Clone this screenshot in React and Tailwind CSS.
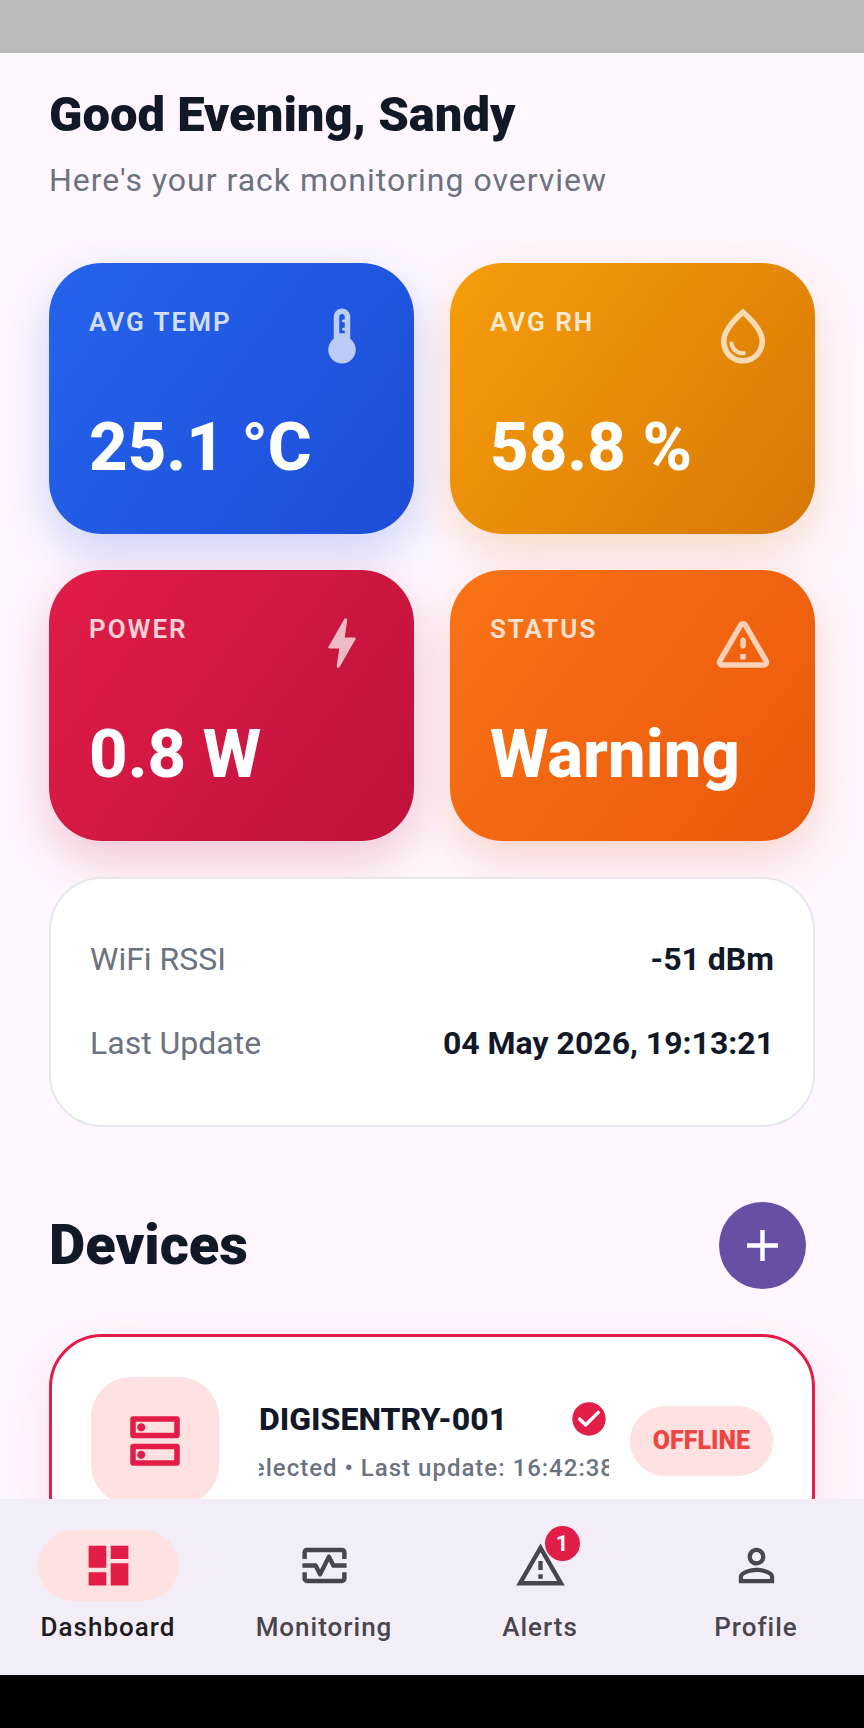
import React, { useState } from "react";
import {
  MdAdd,
  MdDashboard,
  MdOutlineDns,
  MdOutlineMonitorHeart,
  MdOutlineWarningAmber,
  MdOutlineWaterDrop,
  MdPersonOutline,
} from "react-icons/md";

function ThermometerIcon({ className }) {
  return (
    <svg viewBox="0 0 24 24" fill="currentColor" className={className}>
      <path d="M15 13V5c0-1.66-1.34-3-3-3S9 3.34 9 5v8c-1.21.91-2 2.37-2 4 0 2.76 2.24 5 5 5s5-2.24 5-5c0-1.63-.79-3.09-2-4zm-4-2V5c0-.55.45-1 1-1s1 .45 1 1v1h-.5c-.28 0-.5.22-.5.5s.22.5.5.5h.5v2h-.5c-.28 0-.5.22-.5.5s.22.5.5.5h.5v1h-2z" />
    </svg>
  );
}

function BoltIcon({ className }) {
  return (
    <svg viewBox="0 0 24 24" fill="currentColor" className={className}>
      <path d="M10.67 21c-.35 0-.62-.31-.57-.66L11 14H7.5c-.88 0-.33-.75-.31-.78 1.26-2.23 3.15-5.53 5.65-9.93.1-.18.3-.29.5-.29.35 0 .62.31.57.66L13.01 10h3.51c.4 0 .62.19.4.66-3.29 5.74-5.2 9.09-5.75 10.05-.1.18-.29.29-.5.29z" />
    </svg>
  );
}

function WarningIcon({ className }) {
  return (
    <svg viewBox="0 0 24 24" fill="currentColor" className={className}>
      <path d="M12 5.99L19.53 19H4.47L12 5.99M2.74 18c-.77 1.33.19 3 1.73 3h15.06c1.54 0 2.5-1.67 1.73-3L13.73 4.99c-.77-1.33-2.69-1.33-3.46 0L2.74 18zM11 11v2c0 .55.45 1 1 1s1-.45 1-1v-2c0-.55-.45-1-1-1s-1 .45-1 1zm0 5h2v2h-2z" />
    </svg>
  );
}

function CheckIcon({ className }) {
  return (
    <svg viewBox="0 0 24 24" fill="currentColor" className={className}>
      <path d="M12 2C6.48 2 2 6.48 2 12s4.48 10 10 10 10-4.48 10-10S17.52 2 12 2zM9.29 16.29L5.7 12.7c-.39-.39-.39-1.02 0-1.41.39-.39 1.02-.39 1.41 0L10 14.17l6.88-6.88c.39-.39 1.02-.39 1.41 0 .39.39.39 1.02 0 1.41l-7.59 7.59c-.38.39-1.02.39-1.41 0z" />
    </svg>
  );
}

const stats = [
  {
    label: "AVG TEMP",
    value: "25.1 °C",
    icon: ThermometerIcon,
    style:
      "from-[#2563eb] to-[#1d4ed8] shadow-[0_18px_48px_rgba(29,78,216,0.22)]",
  },
  {
    label: "AVG RH",
    value: "58.8 %",
    icon: MdOutlineWaterDrop,
    style:
      "from-[#f59e0b] to-[#d97706] shadow-[0_18px_48px_rgba(217,119,6,0.22)]",
  },
  {
    label: "POWER",
    value: "0.8 W",
    icon: BoltIcon,
    style:
      "from-[#e11d48] to-[#be123c] shadow-[0_18px_48px_rgba(190,18,60,0.22)]",
  },
  {
    label: "STATUS",
    value: "Warning",
    icon: WarningIcon,
    style:
      "from-[#f97316] to-[#ea580c] shadow-[0_18px_48px_rgba(234,88,12,0.22)]",
  },
];

const tabs = [
  { name: "Dashboard", icon: MdDashboard },
  { name: "Monitoring", icon: MdOutlineMonitorHeart },
  { name: "Alerts", icon: MdOutlineWarningAmber, badge: 1 },
  { name: "Profile", icon: MdPersonOutline },
];

function StatCard({ label, value, icon: Icon, style }) {
  return (
    <div
      className={`rounded-[53px] bg-linear-[127deg] py-10 pr-[39px] pl-10 text-white ${style}`}
    >
      <div className="flex items-start justify-between">
        <span className="text-[26px] leading-[38px] font-semibold tracking-[2px] text-white/80">
          {label}
        </span>
        <Icon className="size-[66px] text-white/70" />
      </div>
      <p className="mt-8 text-[67px] leading-[93px] font-extrabold">{value}</p>
    </div>
  );
}

function InfoRow({ label, value }) {
  return (
    <div className="flex items-center justify-between py-5 text-[32px] leading-[44px]">
      <span className="text-[#6b7280]">{label}</span>
      <span className="font-bold">{value}</span>
    </div>
  );
}

function App() {
  const [tab, setTab] = useState("Dashboard");

  return (
    <div className="flex h-screen flex-col bg-[#fef7ff] font-['Roboto',sans-serif] text-[#111827]">
      {/* Status bar */}
      <div className="h-[53px] shrink-0 bg-[#beb9bf]" />

      <main className="min-h-0 flex-1 overflow-y-auto px-[49px] pt-[30px] pb-12 [scrollbar-width:none]">
        {/* Header */}
        <h1 className="text-[49px] leading-[64px] font-black">
          Good Evening, Sandy
        </h1>
        <p className="mt-[11px] text-[32px] leading-[44px] tracking-[1px] text-[#6b7280]">
          Here's your rack monitoring overview
        </p>

        {/* Stats */}
        <div className="mt-[61px] grid grid-cols-2 gap-9">
          {stats.map((s) => (
            <StatCard key={s.label} {...s} />
          ))}
        </div>

        {/* Connection info */}
        <div className="relative mt-9 rounded-[53px] border-2 border-[#e5e7eb] bg-white px-[39px] pt-[38px] pb-10">
          <InfoRow label="WiFi RSSI" value="-51 dBm" />
          <InfoRow label="Last Update" value="04 May 2026, 19:13:21" />
        </div>

        {/* Devices */}
        <div className="mt-[65px] flex h-[106px] items-center justify-between pr-[9px]">
          <h2 className="text-[56px] leading-[76px] font-black">Devices</h2>
          <button
            aria-label="Add device"
            className="flex size-[87px] items-center justify-center rounded-full bg-[#6750a4] text-white"
          >
            <MdAdd className="size-[53px]" />
          </button>
        </div>

        <div className="mt-9 flex items-center rounded-[53px] border-[3px] border-[#e11d48] bg-white px-[39px] py-10 shadow-[0_18px_48px_rgba(225,29,72,0.12)]">
          <div className="flex size-32 shrink-0 items-center justify-center rounded-[40px] bg-[#fee2e2]">
            <MdOutlineDns className="size-[66px] text-[#e11d48]" />
          </div>
          <div className="ml-10 min-w-0 flex-1">
            <div className="flex items-center justify-between">
              <h3 className="text-[32px] leading-[44px] font-extrabold">
                DIGISENTRY-001
              </h3>
              <CheckIcon className="size-10 text-[#e11d48]" />
            </div>
            {/* Scrolling caption, held near its end */}
            <div className="mt-[10px] flex justify-end overflow-hidden">
              <p className="-mr-1.5 shrink-0 text-[24px] leading-[34px] font-medium tracking-[1px] whitespace-nowrap text-[#6b7280]">
                Selected • Last update: 16:42:38
              </p>
            </div>
          </div>
          <span className="ml-[21px] w-[143px] rounded-full bg-[#fee2e2] py-[18px] text-center text-[25px] leading-[34px] font-black text-[#ef4444]">
            OFFLINE
          </span>
        </div>
      </main>

      {/* Bottom navigation */}
      <nav className="relative grid h-44 shrink-0 grid-cols-4 bg-[#f3edf7] pt-[31px]">
        {tabs.map(({ name, icon: Icon, badge }) => (
          <button
            key={name}
            onClick={() => setTab(name)}
            className={`flex flex-col items-center ${
              tab === name ? "text-[#1d1b20]" : "text-[#49454f]"
            }`}
          >
            <span
              className={`relative flex h-[71px] w-[141px] items-center justify-center rounded-full ${
                tab === name ? "bg-[#fee2e2] text-[#e11d48]" : ""
              }`}
            >
              <Icon className="size-[53px]" />
              {badge && (
                <span className="absolute -top-1 right-[31px] flex size-[35px] items-center justify-center rounded-full bg-[#e11d48] text-[22px] leading-none font-bold text-white">
                  {badge}
                </span>
              )}
            </span>
            <span className="mt-2 text-[26px] leading-[36px] font-medium tracking-[1px]">
              {name}
            </span>
          </button>
        ))}
      </nav>
      <div className="h-[53px] shrink-0 bg-black" />
    </div>
  );
}

export default App;
